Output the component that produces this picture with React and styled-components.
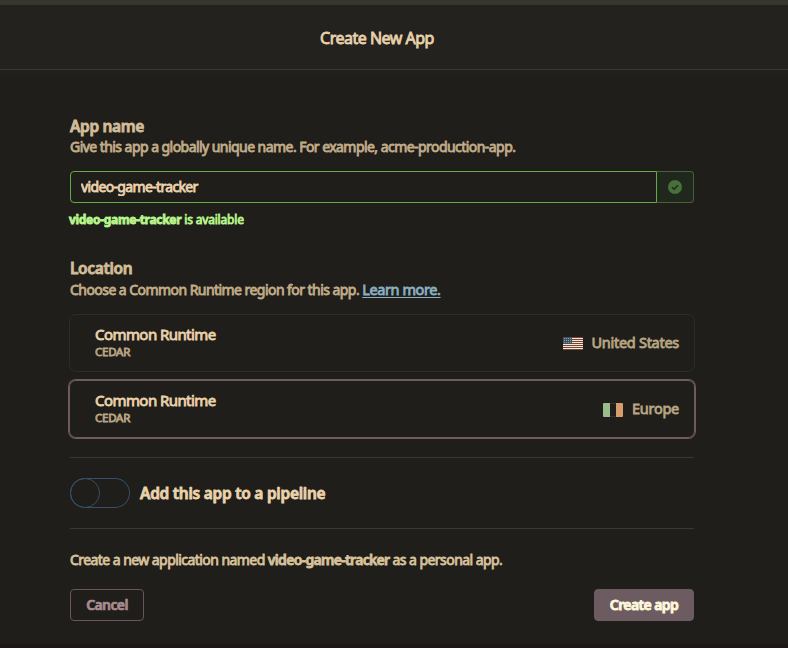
import React from 'react';
import styled, { createGlobalStyle } from 'styled-components';

const GlobalStyle = createGlobalStyle`
  *, *::before, *::after { box-sizing: border-box; }
  html, body { margin: 0; background: #1f1e1a; }
  body { font-family: "Noto Sans", "Open Sans", sans-serif; overflow: hidden; }
  h1, h2, p { margin: 0; }
  button, input { font: inherit; letter-spacing: inherit; margin: 0; }
`;

const Page = styled.div`
  height: 648px;
  display: flex;
  flex-direction: column;
  background: #1f1e1a;
  border-top: 5px solid #38352d;
  border-bottom: 4px solid #1d171a;
  white-space: nowrap;
  -webkit-text-stroke: 0.8px;
`;

const Header = styled.header`
  height: 65px;
  flex: none;
  display: flex;
  justify-content: center;
  align-items: center;
  padding: 1px 34px 0 0;
  background: #23221e;
  border-bottom: 1px solid #383734;
`;

const HeaderShade = styled.div`
  height: 5px;
  flex: none;
  background: #21201c;
`;

const Title = styled.h1`
  font-size: 16px;
  font-weight: 400;
  line-height: 24px;
  letter-spacing: -0.5px;
  color: #e9d2ab;
`;

const Form = styled.main`
  width: 624px;
  margin-left: 70px;
  padding-top: 41px;
  display: flex;
  flex-direction: column;
`;

const Heading = styled.h2`
  font-size: 15.5px;
  font-weight: 600;
  line-height: 20px;
  letter-spacing: -0.34px;
  color: #d3bd98;
`;

const Help = styled.p`
  font-size: 14px;
  line-height: 22px;
  letter-spacing: -0.55px;
  color: #c2ac88;
`;

const LearnMore = styled.a`
  font-size: 14.5px;
  letter-spacing: -0.4px;
  color: #8ab0c2;
  text-decoration: underline;
  text-underline-offset: 2px;
  text-decoration-thickness: 1px;
`;

const InputGroup = styled.div`
  display: flex;
  height: 32px;
  margin-top: 13px;
`;

const NameInput = styled.input`
  flex: 1;
  min-width: 0;
  padding: 0 10px 2px;
  font-size: 14px;
  letter-spacing: -0.65px;
  -webkit-text-stroke: 0.8px;
  color: #ecd3ad;
  background: #1f1e1a;
  border: 1px solid #62ac44;
  border-radius: 4px 0 0 4px;
  outline: none;
`;

const InputStatus = styled.div`
  width: 37px;
  display: flex;
  align-items: center;
  justify-content: center;
  background: #20271c;
  border: 1px solid #486039;
  border-left: 0;
  border-radius: 0 4px 4px 0;
`;

const Availability = styled.p`
  margin: 7px 0 29px -1px;
  font-size: 12px;
  line-height: 19px;
  letter-spacing: -0.18px;
  color: #b9f58c;

  strong { font-weight: 700; letter-spacing: -0.3px; }
`;

const RegionList = styled.div`
  display: flex;
  flex-direction: column;
  gap: 8px;
  margin: 13px -1px 0;
`;

const RegionCard = styled.div`
  display: flex;
  align-items: center;
  justify-content: space-between;
  height: 58px;
  padding: 0 15px 2px 25px;
  border: 1px solid ${(p) => (p.$selected ? '#6f5a63' : '#2d2c29')};
  border-radius: 7px;
  box-shadow: ${(p) => (p.$selected ? '0 0 0 1px #6f5a63' : 'none')};
`;

const RuntimeName = styled.div`
  font-size: 15px;
  line-height: 20px;
  letter-spacing: -0.56px;
  color: #ead3ac;
`;

const RuntimeKind = styled.div`
  font-size: 11.5px;
  line-height: 16px;
  letter-spacing: -0.25px;
  color: #b9a582;
`;

const Country = styled.div`
  display: flex;
  align-items: center;
  gap: 9px;
  font-size: 14.5px;
  line-height: 20px;
  letter-spacing: -0.28px;
  color: #b9a582;

  svg { margin-top: 3px; }
`;

const PipelineRow = styled.label`
  display: flex;
  align-items: center;
  gap: 10px;
  height: 72px;
  margin-top: 19px;
  border-top: 1px solid #393835;
  border-bottom: 1px solid #393835;
  font-size: 15.5px;
  font-weight: 600;
  letter-spacing: -0.26px;
  color: #ead3ac;
`;

const Switch = styled.span`
  display: flex;
  width: 60px;
  height: 30px;
  border-radius: 15px;
  box-shadow: inset 0 0 0 1px #365069;
`;

const SwitchThumb = styled.span`
  width: 30px;
  height: 30px;
  border: 1px solid #365069;
  border-radius: 50%;
`;

const Summary = styled.p`
  margin-top: 21px;
  font-size: 14px;
  line-height: 20px;
  letter-spacing: -0.56px;
  color: #d9c29b;

  strong { font-weight: 600; letter-spacing: -0.68px; }
`;

const Actions = styled.div`
  display: flex;
  justify-content: space-between;
  margin-top: 19px;
`;

const Button = styled.button`
  width: ${(p) => (p.$primary ? 100 : 74)}px;
  height: 32px;
  padding: 0 0 2px;
  font-size: 14px;
  font-weight: 600;
  letter-spacing: -0.6px;
  -webkit-text-stroke: ${(p) => (p.$primary ? '0.9px' : '0.7px')};
  color: ${(p) => (p.$primary ? '#fff7da' : '#aa8c91')};
  background: ${(p) => (p.$primary ? '#6d5b62' : 'transparent')};
  border: 1px solid ${(p) => (p.$primary ? '#6d5b62' : '#6b5360')};
  border-radius: 4px;
`;

const CheckIcon = () => (
  <svg width="14" height="14" viewBox="0 0 14 14">
    <circle cx="7" cy="7" r="7" fill="#48703a" />
    <path d="M4 7.3 6.1 9.3 10 5.2" fill="none" stroke="#20271c" strokeWidth="1.5" />
  </svg>
);

const UsFlag = () => (
  <svg width="20" height="13" viewBox="0 0 20 13" shapeRendering="crispEdges">
    <rect width="20" height="13" fill="#f5ead0" />
    {[0, 2, 4, 6, 8, 10, 12].map((y) => (
      <rect key={y} y={y} width="20" height="1" fill="#744439" />
    ))}
    <rect width="9" height="7" fill="#3f5364" />
    {[1, 3, 5].map((y) =>
      [1, 3, 5, 7].map((x) => (
        <rect key={`${x}-${y}`} x={x} y={y} width="1" height="1" fill="#94998f" />
      ))
    )}
  </svg>
);

const IrelandFlag = () => (
  <svg width="20" height="14" viewBox="0 0 20 14">
    <rect x="0.5" y="0.5" width="19" height="13" rx="1" fill="none" stroke="#35332d" />
    <path d="M1 0H7V14H1Q0 14 0 13V1Q0 0 1 0Z" fill="#9abb8c" />
    <path d="M13 0H19Q20 0 20 1V13Q20 14 19 14H13Z" fill="#d79c6b" />
  </svg>
);

const regions = [
  { country: 'United States', Flag: UsFlag, selected: false },
  { country: 'Europe', Flag: IrelandFlag, selected: true },
];

export default function App() {
  return (
    <>
      <GlobalStyle />
      <Page>
        <Header><Title>Create New App</Title></Header>
        <HeaderShade />
        <Form>
          <Heading>App name</Heading>
          <Help>Give this app a globally unique name. For example, acme-production-app.</Help>
          <InputGroup>
            <NameInput defaultValue="video-game-tracker" spellCheck={false} />
            <InputStatus><CheckIcon /></InputStatus>
          </InputGroup>
          <Availability><strong>video-game-tracker</strong> is available</Availability>
          <Heading>Location</Heading>
          <Help>
            Choose a Common Runtime region for this app. <LearnMore>Learn more.</LearnMore>
          </Help>
          <RegionList>
            {regions.map(({ country, Flag, selected }) => (
              <RegionCard key={country} $selected={selected}>
                <div>
                  <RuntimeName>Common Runtime</RuntimeName>
                  <RuntimeKind>CEDAR</RuntimeKind>
                </div>
                <Country><Flag />{country}</Country>
              </RegionCard>
            ))}
          </RegionList>
          <PipelineRow>
            <Switch><SwitchThumb /></Switch>
            Add this app to a pipeline
          </PipelineRow>
          <Summary>
            Create a new application named <strong>video-game-tracker</strong> as a personal app.
          </Summary>
          <Actions>
            <Button>Cancel</Button>
            <Button $primary>Create app</Button>
          </Actions>
        </Form>
      </Page>
    </>
  );
}
